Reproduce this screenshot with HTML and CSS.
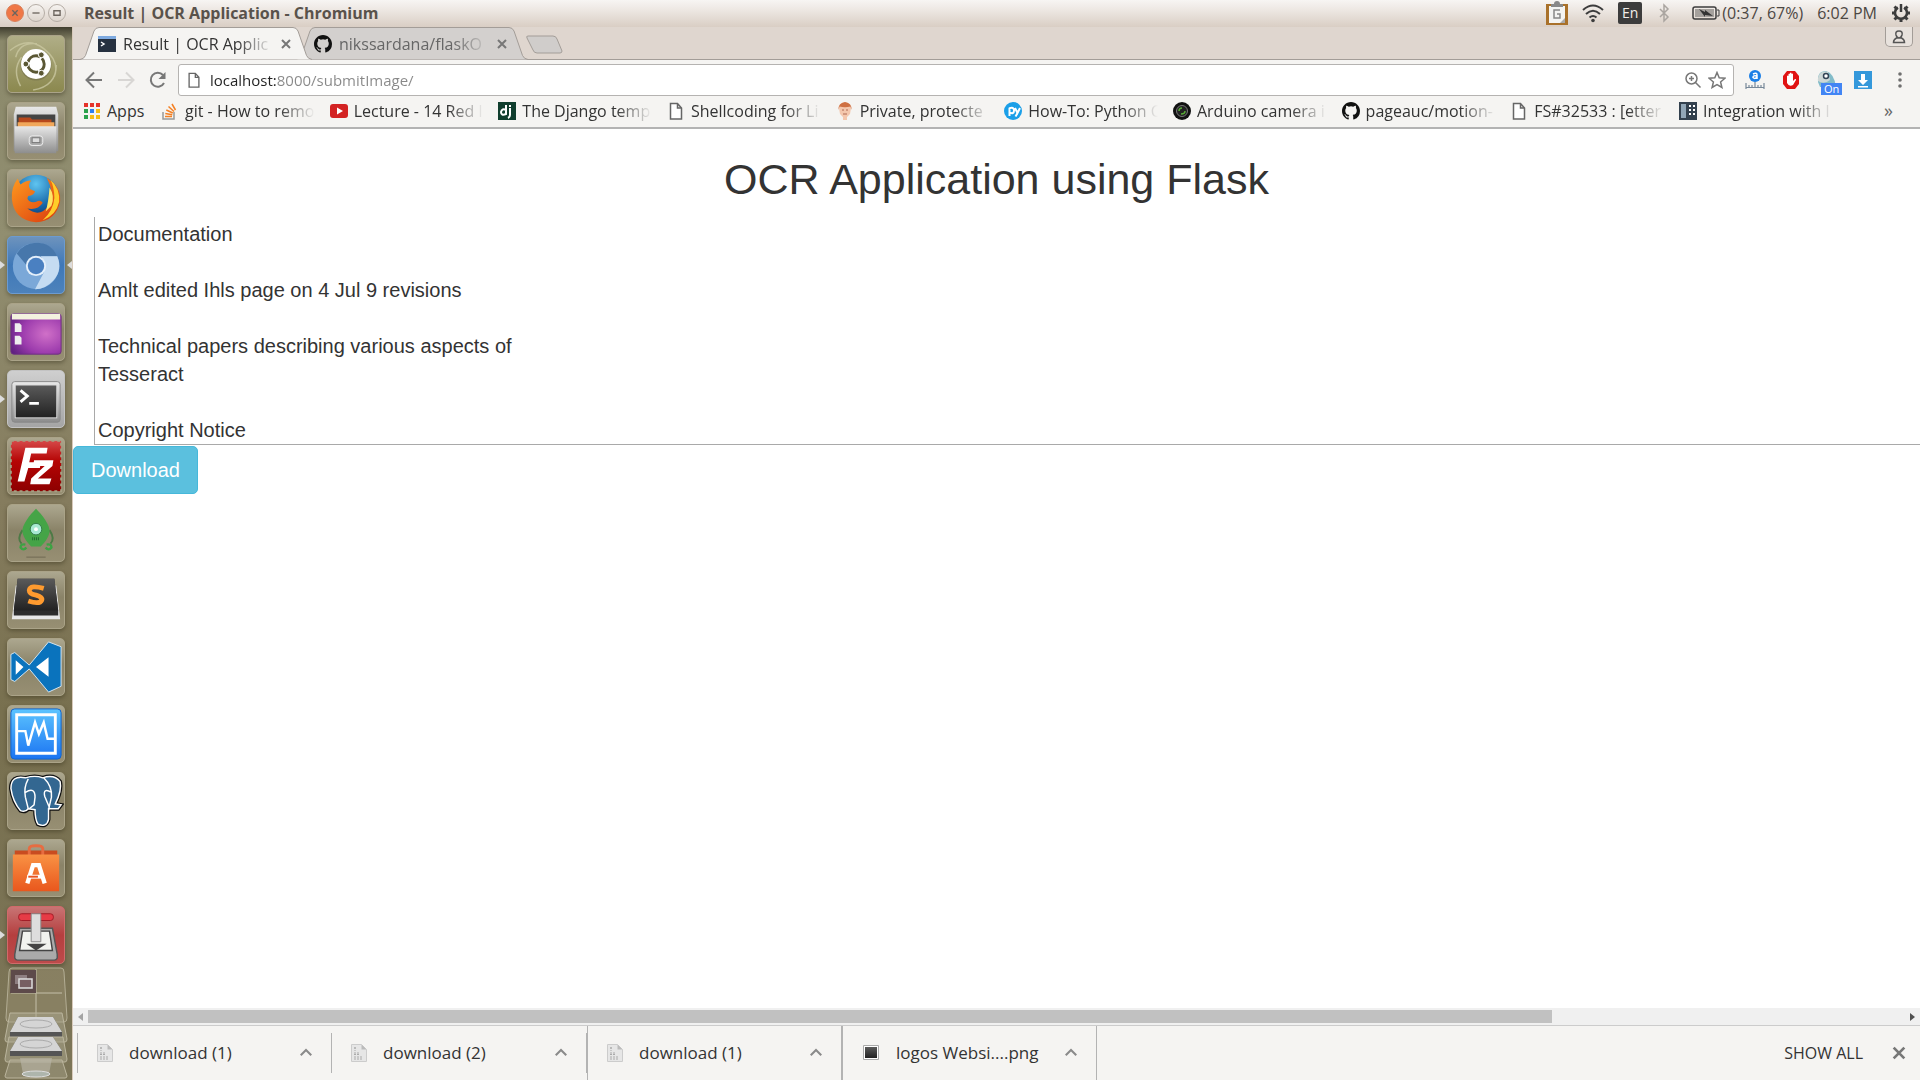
FILE: index.html
```html
<!DOCTYPE html>
<html lang="en">
<head>
<meta charset="utf-8">
<title>Result | OCR Application</title>
<link rel="stylesheet" href="styles.css">
</head>
<body>
<svg class="defs" aria-hidden="true">
  <defs>
    <linearGradient id="steel" x1="0" y1="0" x2="0" y2="1"><stop offset="0" stop-color="#e8e8e8"/><stop offset="1" stop-color="#8d8d8d"/></linearGradient>
    <linearGradient id="dark" x1="0" y1="0" x2="0" y2="1"><stop offset="0" stop-color="#5a5a5a"/><stop offset="1" stop-color="#222"/></linearGradient>
    <linearGradient id="orange" x1="0" y1="0" x2="0" y2="1"><stop offset="0" stop-color="#f99244"/><stop offset="1" stop-color="#e9571d"/></linearGradient>
    <linearGradient id="fox" x1="0" y1="0" x2="1" y2="1"><stop offset="0" stop-color="#ff9a1f"/><stop offset="1" stop-color="#d8390f"/></linearGradient>
    <radialGradient id="globe" cx=".5" cy=".2" r=".8"><stop offset="0" stop-color="#5fc4f0"/><stop offset=".6" stop-color="#1767a9"/><stop offset="1" stop-color="#0b2d66"/></radialGradient>
    <radialGradient id="purple" cx=".7" cy=".5" r=".8"><stop offset="0" stop-color="#d070c8"/><stop offset=".6" stop-color="#9c3bad"/><stop offset="1" stop-color="#5f2080"/></radialGradient>
    <linearGradient id="red" x1="0" y1="0" x2="0" y2="1"><stop offset="0" stop-color="#d54848"/><stop offset=".4" stop-color="#b60505"/><stop offset="1" stop-color="#8d0000"/></linearGradient>
    <linearGradient id="azure" x1="0" y1="0" x2="0" y2="1"><stop offset="0" stop-color="#5cc4ff"/><stop offset="1" stop-color="#1b74f2"/></linearGradient>
    <symbol id="github" viewBox="0 0 16 16"><path d="M8 0C3.58 0 0 3.58 0 8c0 3.54 2.29 6.53 5.47 7.59.4.07.55-.17.55-.38 0-.19-.01-.82-.01-1.49-2.01.37-2.53-.49-2.69-.94-.09-.23-.48-.94-.82-1.13-.28-.15-.68-.52-.01-.53.63-.01 1.08.58 1.23.82.72 1.21 1.87.87 2.33.66.07-.52.28-.87.51-1.07-1.78-.2-3.64-.89-3.64-3.95 0-.87.31-1.59.82-2.15-.08-.2-.36-1.02.08-2.12 0 0 .67-.21 2.2.82a7.6 7.6 0 0 1 4 0c1.53-1.04 2.2-.82 2.2-.82.44 1.1.16 1.92.08 2.12.51.56.82 1.27.82 2.15 0 3.07-1.87 3.75-3.65 3.95.29.25.54.73.54 1.48 0 1.07-.01 1.93-.01 2.2 0 .21.15.46.55.38A8 8 0 0 0 16 8c0-4.42-3.58-8-8-8z" fill="#111"/></symbol>
    <symbol id="file" viewBox="0 0 18 18"><path d="M3.5 1.500h7l4 4.500v11h-11zM10.500 1.500v4.500h4" fill="#fff" stroke="#666" stroke-width="1.500"/></symbol>
    <symbol id="cross" viewBox="0 0 12 12"><path d="M2 2l8 8M10 2l-8 8" stroke="#777" stroke-width="2" fill="none"/></symbol>
    <symbol id="chevron" viewBox="0 0 12 12"><path d="M1.500 8l4.500-4.500L10.500 8" stroke="#8a8a8a" stroke-width="1.800" fill="none"/></symbol>
    <symbol id="bin" viewBox="0 0 16 18"><path d="M.5.500h10l5 5v12H.500z" fill="#e6e6e6" stroke="#ccc"/><path d="M10.500.500v5h5z" fill="#bbb"/><path d="M3 4h2M4 3v4M3 9h5M3 10.500h5M3 13h8M3 15h8" stroke="#aaa" stroke-dasharray="2 1"/></symbol>
    <symbol id="tabshape" viewBox="0 0 232 33"><path d="M0 32.500Q4 32 5.500 28.500L14 4Q15.500.500 19 .500H213Q216.500.500 218 4L226.500 28.500Q228 32 232 32.500" stroke="#a39d98"/></symbol>
  </defs>
</svg>

<header class="panel">
  <div class="window-buttons">
    <button class="wb wb-close" aria-label="Close"><svg viewBox="0 0 18 18"><path d="M6 6l6 6M12 6l-6 6"/></svg></button>
    <button class="wb" aria-label="Minimize"><svg viewBox="0 0 18 18"><path d="M5 9h8"/></svg></button>
    <button class="wb" aria-label="Maximize"><svg viewBox="0 0 18 18"><path d="M5.500 6.500h7v5h-7z"/></svg></button>
  </div>
  <span class="panel-title">Result | OCR Application - Chromium</span>
  <div class="indicators">
    <svg width="22" height="24" viewBox="0 0 22 24"><path d="M0 3h22v21H0z" fill="#a9712a"/><path d="M3 5h16v17H3z" fill="#f4f4f2"/><path d="M5 6V3h3q0-3 3-3t3 3h3v3z" fill="#888"/><path d="M14 9H8v8h6v-4h-3" fill="none" stroke="#888" stroke-width="1.500"/><path d="M19 17v5h-5z" fill="#aaa"/></svg>
    <svg width="22" height="20" viewBox="0 0 22 20"><g fill="none" stroke="#3c3c3c" stroke-width="2"><path d="M1 7q10-9 20 0M4 11q7-6.500 14 0M7.500 14.500q3.500-3 7 0"/></g><circle cx="11" cy="17.500" r="1.800" fill="#3c3c3c"/></svg>
    <span class="lang">En</span>
    <svg class="bt" width="12" height="20" viewBox="0 0 12 20"><path d="M2 6l8 8-4 4V2l4 4-8 8" fill="none" stroke="#aaa5a0" stroke-width="1.500"/></svg>
    <span class="battery"><svg width="28" height="16" viewBox="0 0 28 16"><rect x="1" y="2" width="23" height="12" rx="2" fill="none" stroke="#3c3c3c" stroke-width="1.500"/><path d="M25 5h2v6h-2" fill="none" stroke="#3c3c3c"/><rect x="3" y="4" width="19" height="8" fill="#a5a19d"/><path d="M7 4l6 3v-2l8 6-8-1v2z" fill="#333"/></svg><span>(0:37, 67%)</span></span>
    <span class="clock">6:02 PM</span>
    <svg width="20" height="20" viewBox="0 0 20 20"><g fill="none" stroke="#3c3c3c"><path d="M7 4.600a6 6 0 1 0 6 0" stroke-width="2.500"/><path d="M10 1v8" stroke-width="2.500"/><path d="M1 10h3M16 10h3M3.500 3.500l2 2M14.500 5.500l2-2M3.500 16.500l2-2M14.500 14.500l2 2M10 16v3" stroke-width="3"/></g></svg>
  </div>
</header>

<div class="desktop">
  <nav class="launcher" aria-label="Launcher">
    <button class="tile tile-dash" aria-label="Dash"><svg viewBox="0 0 58 58"><g fill="none" stroke="#c9c7a0" stroke-width="1.500" opacity=".8"><path d="M2 15Q20 0 37 13T48 42M8 22Q12 6 30 8M13 52Q4 35 14 22M50 30Q50 52 26 56"/></g><circle cx="29" cy="30" r="16" fill="#6b6846" opacity=".5"/><circle cx="29" cy="29" r="15.500" fill="#fff"/><circle cx="29" cy="29" r="8.500" fill="none" stroke="#5a5734" stroke-width="3" stroke-dasharray="15.800 2" stroke-dashoffset="7"/><g fill="#5a5734" stroke="#fff"><circle cx="18.500" cy="29" r="3"/><circle cx="34.500" cy="19.500" r="3"/><circle cx="34.500" cy="38.500" r="3"/></g></svg></button>
    <button class="tile" aria-label="Files"><svg viewBox="0 0 58 58"><path d="M8 4h42l2 8v38H6V12z" fill="url(#steel)"/><path d="M9 12h40v14H9z" fill="#444"/><path d="M11 15h12l2 2h20v9H11z" fill="#b8481b"/><path d="M10 20h38v5H10z" fill="#f1a75a"/><path d="M7 24h43v28H7z" fill="url(#steel)"/><rect x="22" y="34" width="14" height="10" rx="3" fill="#aaa" stroke="#eee"/><rect x="25" y="36" width="8" height="5" fill="#ddd" stroke="#777"/></svg></button>
    <button class="tile" aria-label="Firefox"><svg viewBox="0 0 58 58"><circle cx="29" cy="29" r="24" fill="url(#globe)"/><path d="M40 8Q55 17 54 32 50 53 29 54 6 52 4 30 3 18 10 9l3 6q5-4 11-4-4 5-1 9l5 2q-1 4-7 5-2 3 1 5 4 3 9 0 3-1 5 2-5 8-16 6Q33 50 43 36 48 22 40 8z" fill="url(#fox)"/><path d="M44 10q10 9 9 23-3 14-17 19 11-10 12-23 0-11-4-19z" fill="#ffcd29"/><path d="M43 18q6 9 2 19l-6 6q3-10 4-25z" fill="#ffe566"/></svg></button>
    <button class="tile tile-chromium" aria-label="Chromium"><svg viewBox="0 0 58 58"><circle cx="29" cy="30" r="24" fill="#7ba8d8"/><path d="M9 17Q17 6 29 6q16 0 22 14H29q-9 0-10 9z" fill="#4777ab"/><path d="M51 20q6 14-4 25-8 9-19 9l9-17q3-8-3-17z" fill="#c5dcf2"/><circle cx="29" cy="30" r="10.500" fill="#e4effa"/><circle cx="29" cy="30" r="8.500" fill="#4a80c1"/></svg></button>
    <button class="tile" aria-label="Desktop window"><svg viewBox="0 0 58 58"><rect x="3" y="10" width="52" height="42" rx="3" fill="url(#purple)" stroke="#6d3180"/><path d="M4 10h50v6H4z" fill="#f3f1df"/><path d="M7 20h5l2 2v7H7zM7 33h5l2 2v7H7z" fill="#eee"/></svg></button>
    <button class="tile tile-light" aria-label="Terminal"><svg viewBox="0 0 58 58"><rect x="4" y="11" width="50" height="42" rx="3" fill="url(#steel)" stroke="#888"/><rect x="7" y="14" width="44" height="35" fill="#ddd"/><rect x="8" y="15" width="42" height="33" fill="url(#dark)"/><path d="M13 20l7 6-7 6M22 33.500h10" fill="none" stroke="#fff" stroke-width="3"/></svg></button>
    <button class="tile" aria-label="FileZilla"><svg viewBox="0 0 58 58"><rect x="3" y="3" width="52" height="52" fill="url(#red)" stroke="#a69f83" stroke-width="2" stroke-dasharray="3 3"/><path d="M18 10h23l-1 6H24l-2 9h12l-1 6H21l-4 14H10z" fill="#fff"/><path d="M27 23h20l-1 6-15 13h14l-2 6H23l1-6 14-13H26z" fill="#fff"/></svg></button>
    <button class="tile" aria-label="GitKraken"><svg viewBox="0 0 58 58"><path d="M15 26q-6 9-1 14M43 26q6 9 1 14" fill="none" stroke="#4c7a45" stroke-width="2"/><path d="M29 4C35 10 44 21 43 28 42 35 36 41 34 43H24C22 41 16 35 15 28 14 21 23 10 29 4z" fill="#45a447"/><circle cx="29" cy="25" r="6" fill="#a7e8d2" stroke="#327b46"/><circle cx="29" cy="25" r="2" fill="#fff"/><path d="M25 35h8" stroke="#246b32" stroke-width="3" stroke-dasharray="1 1"/><path d="M18 41q-5-1-5 3 3 4 6 0M40 41q5-1 5 3-3 4-6 0" fill="none" stroke="#3ca343" stroke-width="2.500"/><path d="M19 54h20" stroke="#706951"/></svg></button>
    <button class="tile" aria-label="Sublime Text"><svg viewBox="0 0 58 58"><path d="M8 14h42l4 35H4z" fill="#e8e8e8"/><path d="M10 7h38l4 33v5H6v-5z" fill="#2d2d2d"/><path d="M10 7h38l4 33H6z" fill="url(#dark)"/><path d="M37 17q-14-4-15 2 0 4 7 5 7 2 6 5-2 5-14 1" fill="none" stroke="#ff9b2f" stroke-width="5"/></svg></button>
    <button class="tile" aria-label="Visual Studio Code"><svg viewBox="0 0 58 58"><path d="M3 16l4-2 15 13L42 3l13 5v41l-13 6-20-24L7 44l-4-2z" fill="#0a73bd" stroke="#d4e6f3"/><path d="M42 19v20L29 29zM8 22l8 7-8 8z" fill="#fff"/></svg></button>
    <button class="tile" aria-label="System monitor"><svg viewBox="0 0 58 58"><rect x="3" y="3" width="52" height="52" rx="4" fill="url(#azure)" stroke="#1264cb"/><path d="M9 9h40v40H9z" fill="none" stroke="#fff" stroke-width="3"/><path d="M10 26h8l3 15 7-24 4 12 5-12 4 17h8" fill="none" stroke="#fff" stroke-width="2.500"/></svg></button>
    <button class="tile" aria-label="pgAdmin"><svg viewBox="0 0 58 58"><path d="M18 5Q3 2 3 16q2 14 10 23 5 2 8-2l7 1q0 10 3 15 9 4 11-5V37h10l3-4-6-1Q56 18 54 9 48 1 36 5q-8-3-18 0z" fill="#336791" stroke="#111" stroke-width="4"/><path d="M18 5Q3 2 3 16q2 14 10 23 5 2 8-2l7 1q0 10 3 15 9 4 11-5V37h10l3-4-6-1Q56 18 54 9 48 1 36 5q-8-3-18 0z" fill="#336791" stroke="#fff" stroke-width="1.500"/><path d="M21 6q-5 9-3 19l3 12M18 20q10-6 10 5l-1 8-5 4M37 5q9 9 8 20l-3 13M45 20q-9-5-7 4l5 12" fill="none" stroke="#fff" stroke-width="1.500"/></svg></button>
    <button class="tile" aria-label="Ubuntu Software"><svg viewBox="0 0 58 58"><path d="M7 11h44v10H7z" fill="#c94c20"/><path d="M22 18V9q0-3 7-3t7 3v9" fill="none" stroke="#e76c41" stroke-width="3"/><path d="M5 15h48v38H5z" fill="url(#orange)"/><path d="M20 45l6-19h6l6 19" fill="none" stroke="#fff" stroke-width="4.500"/><path d="M20 38h17" stroke="#fff" stroke-width="4"/><path d="M21 38h10" stroke="#e95420" stroke-width="2"/></svg></button>
    <button class="tile tile-red" aria-label="Transmission"><svg viewBox="0 0 58 58"><rect x="11" y="7" width="36" height="7" rx="3" fill="#e63b46" stroke="#a11c26"/><path d="M12 22h34l5 27v4q-1 2-3 2H10q-2 0-3-2v-4z" fill="#aaa" stroke="#555" stroke-width="1.500"/><path d="M15 25h28l3 20H12z" fill="#f1f3ef" stroke="#444" stroke-width="1.500"/><path d="M24 7h10v29H24z" fill="#ddd" stroke="#888"/><path d="M19 38h21L29 45z" fill="#444"/></svg></button>
    <svg class="stack" viewBox="0 0 72 116" aria-hidden="true"><g stroke="#b3ad94" fill="#a49d7e" fill-opacity=".3"><path d="M12 4h49q3 0 3 4l3 46q0 4-3 4H9q-3 0-3-4L9 8q0-4 3-4z"/><path d="M36 5v52M11 29h51" stroke="#c4bfa9"/></g><path d="M11 6h25v23H10z" fill="#5d4a4a"/><path d="M15 11h12v9H15z" fill="#8e7f81"/><path d="M19 15h13v9H19z" fill="#775e62" stroke="#ddd" stroke-width="1.500"/><path d="M10 49h52l5 26q0 3-2 3H7q-2 0-2-3z" fill="#aaa58e" fill-opacity=".5" stroke="#bbb59d"/><path d="M18 53h35l9 15v5H10v-5z" fill="#555"/><path d="M18 53h35l9 15H10z" fill="#d5d5d5"/><ellipse cx="36" cy="60" rx="16" ry="4" fill="none" stroke="#aaa"/><path d="M9 73h54l4 22q0 3-2 3H7q-2 0-2-3z" fill="#aaa58e" fill-opacity=".5" stroke="#bbb59d"/><path d="M18 73h35l9 14v5H10v-5z" fill="#555"/><path d="M18 73h35l9 14H10z" fill="#d5d5d5"/><ellipse cx="36" cy="80" rx="16" ry="4" fill="none" stroke="#aaa"/><path d="M10 96h52l5 16q0 2-2 2H7q-2 0-2-2z" fill="#aaa58e" fill-opacity=".4" stroke="#bbb59d"/><path d="M20 94h32l-3 16q-13 3-26 0z" fill="#bbb8aa" opacity=".6"/><ellipse cx="36" cy="110" rx="14" ry="3" fill="#aeb5ac" stroke="#ddd"/></svg>
    <i class="run run-1"></i><i class="run run-2"></i><i class="run run-3"></i><i class="focus"></i>
  </nav>

  <main class="browser">
    <div class="tabstrip">
      <div class="tab tab-active"><svg class="tab-bg"><use href="#tabshape"/></svg>
        <svg class="icon" viewBox="0 0 18 18"><path d="M0 1h18v4H0z" fill="#7eaae0"/><path d="M0 4h18v13H0z" fill="#263140"/><path d="M3 7l3 2-3 2" fill="none" stroke="#fff" stroke-width="1.500"/></svg>
        <span class="tab-label">Result | OCR Applic</span><button class="plain" aria-label="Close tab"><svg class="small"><use href="#cross"/></svg></button></div>
      <div class="tab"><svg class="tab-bg"><use href="#tabshape"/></svg>
        <svg class="icon"><use href="#github"/></svg>
        <span class="tab-label">nikssardana/flaskO</span><button class="plain" aria-label="Close tab"><svg class="small"><use href="#cross"/></svg></button></div>
      <button class="plain newtab" aria-label="New tab"><svg width="40" height="20" viewBox="0 0 40 20"><path d="M3 1h25q3 0 4 3l5 12q0 2-2 2H12q-3 0-4-3L2 3q-1-2 1-2z" fill="#d0cdcb" stroke="#a39d98"/></svg></button>
      <button class="profile" aria-label="Profile"><svg width="14" height="14" viewBox="0 0 14 14"><path d="M7 1q4 0 3 4-1 3-3 3T4 5Q3 1 7 1zM1.500 12.500q0-3 3-4.500h5q3 1.500 3 4.500z" fill="none" stroke="#555" stroke-width="1.500"/></svg></button>
    </div>

    <div class="toolbar">
      <div class="nav-buttons">
        <button class="plain" aria-label="Back"><svg class="icon" viewBox="0 0 18 18"><path d="M17 9H2M9 1.500L1.500 9 9 16.500" fill="none" stroke="#777" stroke-width="2"/></svg></button>
        <button class="plain" aria-label="Forward"><svg class="icon" viewBox="0 0 18 18"><path d="M1 9h15M9 1.500L16.500 9 9 16.500" fill="none" stroke="#d8d6d4" stroke-width="2"/></svg></button>
        <button class="plain" aria-label="Reload"><svg class="icon" viewBox="0 0 18 18"><path d="M15 12A7 7 0 1 1 14 4" fill="none" stroke="#777" stroke-width="2"/><path d="M16.500 1v7h-7z" fill="#777"/></svg></button>
      </div>
      <div class="omnibox">
        <svg class="page-icon"><use href="#file"/></svg>
        <input class="url" type="text" aria-label="Address" value="localhost:8000/submitImage/">
        <svg class="icon" viewBox="0 0 18 18"><g fill="none" stroke="#777" stroke-width="1.500"><circle cx="7.500" cy="7.500" r="5.500"/><path d="M11.500 11.500l5 5M5 7.500h5M7.500 5v5"/></g></svg>
        <svg class="icon" viewBox="0 0 18 18"><path d="M9 1.500l2.200 5.200 5.800.5-4.400 3.800 1.300 5.500L9 13.600l-4.900 2.900L5.400 11 1 7.200l5.800-.5z" fill="none" stroke="#777" stroke-width="1.500"/></svg>
      </div>
      <div class="extensions">
        <svg width="20" height="20" viewBox="0 0 20 20"><circle cx="10" cy="6" r="6" fill="#1b7fe6"/><path d="M8 4q4-2 4 1v4M12 6q-4-1-4 1.500 2 2 4-.5" fill="none" stroke="#fff" stroke-width="1.500"/><path d="M1 13v6M19 13v6M1 17.500h18M4 15v3M7 15v3M10 12v6M13 15v3M16 15v3" stroke="#789" stroke-width="1.200"/></svg>
        <svg width="18" height="20" viewBox="0 0 18 20"><path d="M5 1h8l4 5v8l-4 5H5l-4-5V6z" fill="#e01313"/><path d="M5 11V6q1-1 1.500 0v3-5q1-1 1.500 0v4-5q1-1 1.500 0v5-4q1-1 1.500 0v7l2-2q1.500 0 1 1l-3 5q-4 2-6-2z" fill="#fff"/></svg>
        <span class="ext-on"><svg width="20" height="20" viewBox="0 0 20 20"><path d="M1 12Q0 1 9 1q8 2 10 16H3z" fill="#83bcc9"/><path d="M1 8Q3 0 11 2l2 8q-6 5-12 1z" fill="#cdd7d6"/><circle cx="9" cy="6" r="2.500" fill="#fff" stroke="#345" stroke-width="1.500"/></svg><b>On</b></span>
        <svg width="18" height="20" viewBox="0 0 18 20"><path d="M0 1h18v18H0z" fill="#3498db"/><path d="M7 4h4v6h3l-5 5-5-5h3zM4 16h10v1.500H4z" fill="#fff"/></svg>
        <button class="plain menu" aria-label="Menu"><svg width="6" height="18" viewBox="0 0 6 18"><g fill="#6f6f6f"><circle cx="3" cy="3" r="1.800"/><circle cx="3" cy="9" r="1.800"/><circle cx="3" cy="15" r="1.800"/></g></svg></button>
      </div>
    </div>

    <nav class="bookmarks" aria-label="Bookmarks">
      <a class="apps" href="#"><svg class="grid-icon" viewBox="0 0 16 16"><g stroke-width="4" stroke-dasharray="4 2"><path d="M0 2h16" stroke="#e5332a"/><path d="M0 8h4" stroke="#2ba24c"/><path d="M6 8h4" stroke="#2e7ff0"/><path d="M12 8h4" stroke="#f6bd16"/><path d="M0 14h4" stroke="#2ba24c"/><path d="M6 14h10" stroke="#f6bd16"/></g></svg>Apps</a>
      <div class="links">
        <a href="#"><svg class="icon" viewBox="0 0 18 18"><path d="M2 10v7h11v-7" fill="none" stroke="#999" stroke-width="1.500"/><path d="M4 14.500h7M4.300 11.500l7 1.200M5.300 8l6.500 3M7.500 4.500l5.500 5M11 2l3.500 6" stroke="#f48024" stroke-width="1.500"/></svg><span>git - How to remo</span></a>
        <a href="#"><svg class="icon" viewBox="0 0 18 18"><rect y="2" width="18" height="14" rx="3" fill="#d32323"/><path d="M7 5.500v7L13 9z" fill="#fff"/></svg><span>Lecture - 14 Red l</span></a>
        <a href="#"><svg class="icon" viewBox="0 0 18 18"><path d="M0 0h18v18H0z" fill="#103e2e"/><path d="M8 3v9q-5 2-5-2 1-4 5-2M12 6v7q0 2-2 3M12 3v2" fill="none" stroke="#fff" stroke-width="2"/></svg><span>The Django temp</span></a>
        <a href="#"><svg class="icon"><use href="#file"/></svg><span>Shellcoding for Li</span></a>
        <a href="#"><svg class="icon" viewBox="0 0 18 18"><path d="M3 6q0-5 6-6 6 1 6 6l-1 6-3 3v3H7v-3l-3-3z" fill="#f4c7ad"/><path d="M2.500 8Q2 1 9 0q7 1 6.500 8l-1-3.500Q9 6 3.500 4.500z" fill="#cf7042"/><path d="M6 8h2M10 8h2M7 12h4" stroke="#b06b55"/></svg><span>Private, protecte</span></a>
        <a href="#"><svg class="icon" viewBox="0 0 18 18"><circle cx="9" cy="9" r="9" fill="#1b9fe8"/><path d="M5.500 14V6M5 6.500q5-2 5 2t-4.500 2M11 6l2.500 5L16 6M13.500 11l-2 3.500" fill="none" stroke="#fff" stroke-width="2"/></svg><span>How-To: Python C</span></a>
        <a href="#"><svg class="icon" viewBox="0 0 18 18"><circle cx="9" cy="9" r="9" fill="#111"/><circle cx="9" cy="9" r="5.500" fill="#222" stroke="#777"/><path d="M6 9q0-3 3-3M8 12q4 0 4-3" fill="none" stroke="#58ac36" stroke-width="1.500"/></svg><span>Arduino camera i</span></a>
        <a href="#"><svg class="icon"><use href="#github"/></svg><span>pageauc/motion-</span></a>
        <a href="#"><svg class="icon"><use href="#file"/></svg><span>FS#32533 : [etter</span></a>
        <a href="#"><svg class="icon" viewBox="0 0 18 18"><path d="M0 0h18v18H0z" fill="#33414e"/><path d="M2 2h5v14H2z" fill="#91a6b6"/><path d="M10 4h2M14 4h2M10 8h2M14 8h2M10 12h2M14 12h2" stroke="#fff" stroke-width="2"/></svg><span>Integration with l</span></a>
      </div>
      <button class="plain more" aria-label="More bookmarks">»</button>
    </nav>

    <section class="page">
      <h1>OCR Application using Flask</h1>
      <div class="result"><p>Documentation</p><p>Amlt edited Ihls page on 4 Jul 9 revisions</p><p>Technical papers describing various aspects of<br>Tesseract</p><p>Copyright Notice</p></div>
      <button class="download">Download</button>
    </section>

    <div class="scrollbar" aria-hidden="true"><i class="arrow-left"></i><div class="thumb"></div><div class="rest"></div><i class="arrow-right"></i></div>

    <footer class="shelf">
      <div class="item"><svg width="16" height="18"><use href="#bin"/></svg><span>download (1)</span><button class="plain" aria-label="Options"><svg class="chev"><use href="#chevron"/></svg></button></div>
      <div class="item"><svg width="16" height="18"><use href="#bin"/></svg><span>download (2)</span><button class="plain" aria-label="Options"><svg class="chev"><use href="#chevron"/></svg></button></div>
      <div class="item item-tall"><svg width="16" height="18"><use href="#bin"/></svg><span>download (1)</span><button class="plain" aria-label="Options"><svg class="chev"><use href="#chevron"/></svg></button></div>
      <div class="item item-tall"><svg width="18" height="18" viewBox="0 0 16 18"><path d="M.5 1.500h15v14H.500z" fill="#fff" stroke="#aaa"/><path d="M2 3h12v11H2z" fill="url(#dark)"/></svg><span>logos Websi....png</span><button class="plain" aria-label="Options"><svg class="chev"><use href="#chevron"/></svg></button></div>
      <button class="plain show-all">SHOW ALL</button>
      <button class="plain" aria-label="Close downloads bar"><svg class="cross-lg"><use href="#cross"/></svg></button>
    </footer>
  </main>
</div>
</body>
</html>
```

FILE: styles.css
```css
* { box-sizing: border-box; }
body {
  margin: 0;
  min-height: 100vh;
  display: flex;
  flex-direction: column;
  font: 16px/20px "Open Sans", "Noto Sans", sans-serif;
  color: #333;
  background: #fff;
}
button { font: inherit; color: inherit; cursor: pointer; }
svg { display: block; flex: none; }
.defs { position: absolute; width: 0; height: 0; }
.plain { border: 0; padding: 0; background: none; }
.icon { width: 18px; height: 18px; }
.small { width: 12px; height: 12px; }

/* top panel */
.panel {
  height: 27px;
  display: flex;
  align-items: center;
  padding: 0 9px 2px 6px;
  background: linear-gradient(#f7f5f3, #ece6e1 40%, #d9cec4);
  color: #4c4743;
}
.window-buttons { display: flex; gap: 3px; width: 78px; }
.wb {
  width: 18px;
  height: 18px;
  padding: 0;
  border: 1px solid #b5ada5;
  border-radius: 50%;
  background: linear-gradient(#f6f3f0, #ddd5cd);
}
.wb svg { width: 16px; height: 16px; fill: none; stroke: #6c655e; stroke-width: 1.5; }
.wb-close { background: #f07746; border-color: #d9805a; }
.panel-title { flex: 1; font-size: 16px; font-weight: 700; color: #59524b; }
.indicators { display: flex; align-items: center; gap: 14px; }
.lang {
  width: 24px;
  border-radius: 2px;
  background: #3c3c3c;
  color: #f2eeea;
  font-size: 14px;
  line-height: 22px;
  text-align: center;
}
.bt { margin: 0 8px 0 2px; }
.battery { display: flex; align-items: center; gap: 2px; }

.desktop { flex: 1; display: flex; }

/* launcher */
.launcher {
  position: relative;
  width: 72px;
  padding-top: 8px;
  display: flex;
  flex-direction: column;
  align-items: center;
  gap: 9px;
  background: linear-gradient(#3f3d2e, #8b896b 14px, #918e70 20%, #857c5e 45%, #78704f 65%, #7c7558 100%);
}
.tile {
  width: 58px;
  height: 58px;
  padding: 0;
  border: 1px solid #aaa388;
  border-radius: 5px;
  background: linear-gradient(#aca78f, #8a8368 45%, #978f73);
  box-shadow: 0 2px 4px rgb(40 35 15 / 40%);
  flex: none;
}
.tile svg { width: 56px; height: 56px; }
.tile-dash { background: linear-gradient(#b0ae87, #8b884e); }
.tile-chromium { background: linear-gradient(#6d93bd, #3f78b8 50%, #4d82bb); border-color: #6c9bd0; }
.tile-light { background: linear-gradient(#cfcfcf, #a5a5a5); border-color: #c3c3c3; }
.tile-red { background: linear-gradient(#c87474, #b53f3f 50%, #bd4a4a); border-color: #d06a6a; }
.stack { width: 72px; height: 116px; margin-top: -9px; }
.run, .focus { position: absolute; width: 0; height: 0; border: 4px solid transparent; }
.run { left: 0; border-width: 4px 0 4px 5px; border-left-color: #ddd; }
.run-1 { top: 234px; }
.run-2 { top: 368px; }
.run-3 { top: 904px; }
.focus { right: 0; top: 234px; border-width: 4px 5px 4px 0; border-right-color: #ddd; }

/* browser */
.browser { flex: 1; min-width: 0; display: flex; flex-direction: column; border-left: 1px solid #d8cabb; }
.tabstrip {
  height: 33px;
  display: flex;
  align-items: flex-start;
  padding: 0 7px;
  background: #dfd6cf;
  box-shadow: inset 0 -1px #a39d98;
}
.tab {
  position: relative;
  isolation: isolate;
  width: 232px;
  height: 33px;
  display: flex;
  align-items: center;
  padding: 0 20px 0 18px;
  gap: 7px;
  color: #666;
}
.tab + .tab { margin-left: -16px; }
.tab-active { z-index: 1; color: #333; }
.tab-bg { position: absolute; inset: 0; width: 232px; height: 33px; z-index: -1; fill: #d3d0ce; }
.tab-active .tab-bg { fill: #f5f4f2; }
.tab-label { flex: 1; min-width: 0; }
.tab-label, .links span {
  overflow: hidden;
  white-space: nowrap;
  mask-image: linear-gradient(to left, transparent, #000 36px);
}
.newtab { margin: 8px 0 0 -3px; }
.profile {
  width: 28px;
  height: 20px;
  display: grid;
  place-items: center;
  margin-left: auto;
  padding: 0;
  border: 1px solid #a39d98;
  border-top: 0;
  border-radius: 0 0 5px 5px;
  background: #e8e2dd;
}
.toolbar {
  display: flex;
  align-items: center;
  padding: 4px 17px 0 12px;
  gap: 11px;
  background: #f5f4f2;
}
.nav-buttons { display: flex; gap: 14px; }
.omnibox {
  flex: 1;
  height: 32px;
  display: flex;
  align-items: center;
  gap: 6px;
  padding: 0 7px;
  border: 1px solid #b5b3b1;
  border-radius: 3px;
  background: #fff;
}
.page-icon { width: 16px; height: 16px; }
.url {
  flex: 1;
  min-width: 0;
  border: 0;
  padding: 0;
  margin-left: 2px;
  font: inherit;
  font-size: 15px;
  color: transparent;
  background: linear-gradient(90deg, #222 66px, #888 66px);
  background-clip: text;
  outline: 0;
}
.extensions { display: flex; align-items: center; gap: 17px; }
.menu { margin-left: 8px; }
.ext-on { position: relative; }
.ext-on b {
  position: absolute;
  left: 4px;
  top: 13px;
  padding: 0 3px;
  background: #4285f4;
  color: #fff;
  font-size: 11px;
  font-weight: 400;
  line-height: 12px;
}
.bookmarks {
  display: flex;
  align-items: center;
  height: 33px;
  padding: 0 27px 2px 11px;
  border-bottom: 2px solid #b3b3b3;
  background: #f5f4f2;
}
.bookmarks a { color: #333; text-decoration: none; display: flex; align-items: center; }
.apps { width: 77px; gap: 7px; }
.grid-icon { width: 16px; height: 16px; }
.links { flex: 1; display: flex; justify-content: space-between; }
.links a { gap: 6px; }
.links span { width: 130px; }
.more { width: 60px; text-align: right; font-size: 18px; padding-bottom: 2px; color: #666; }

/* web page */
.page {
  flex: 1;
  font-family: "Liberation Sans", Arial, sans-serif;
  font-size: 20px;
  line-height: 28px;
  color: #333;
}
h1 { margin: 0; padding: 27px 0 15px; font-size: 43px; line-height: 46px; font-weight: 400; text-align: center; }
.result {
  margin-left: 21px;
  padding: 3px 3px 0;
  border: solid #a9a9a9;
  border-width: 0 0 1px 1px;
}
.result p { margin: 0 0 28px; }
.result p:last-child { margin: 0; }
.download {
  display: block;
  height: 48px;
  margin-top: 1px;
  padding: 0 17px;
  border: 1px solid #46b8da;
  border-radius: 5px;
  background: #5bc0de;
  color: #fff;
}
.scrollbar { height: 17px; display: flex; align-items: center; padding: 0 5px; background: #f0f0f0; }
.thumb { flex: 45; height: 13px; margin-left: 5px; background: #c1c1c1; }
.rest { flex: 11; }
.arrow-left, .arrow-right { border: 4px solid transparent; }
.arrow-left { border-width: 4px 5px 4px 0; border-right-color: #a3a3a3; }
.arrow-right { border-width: 4px 0 4px 5px; border-left-color: #505050; }

/* downloads */
.shelf {
  height: 55px;
  display: flex;
  align-items: center;
  padding: 0 13px 0 4px;
  border-top: 1px solid #ccc;
  background: #f5f4f2;
  font-size: 17px;
}
.item {
  width: 255px;
  height: 40px;
  display: flex;
  align-items: center;
  padding: 0 18px 0 19px;
  gap: 16px;
  border-right: 1px solid #b3b3b3;
}
.item:first-child { border-left: 1px solid #b3b3b3; }
.item-tall { height: 54px; border-left: 1px solid #b3b3b3; }
.item span { flex: 1; white-space: nowrap; }
.chev { width: 14px; height: 14px; }
.show-all { margin: 0 28px 0 auto; font-size: 16px; }
.cross-lg { width: 16px; height: 16px; }
```
